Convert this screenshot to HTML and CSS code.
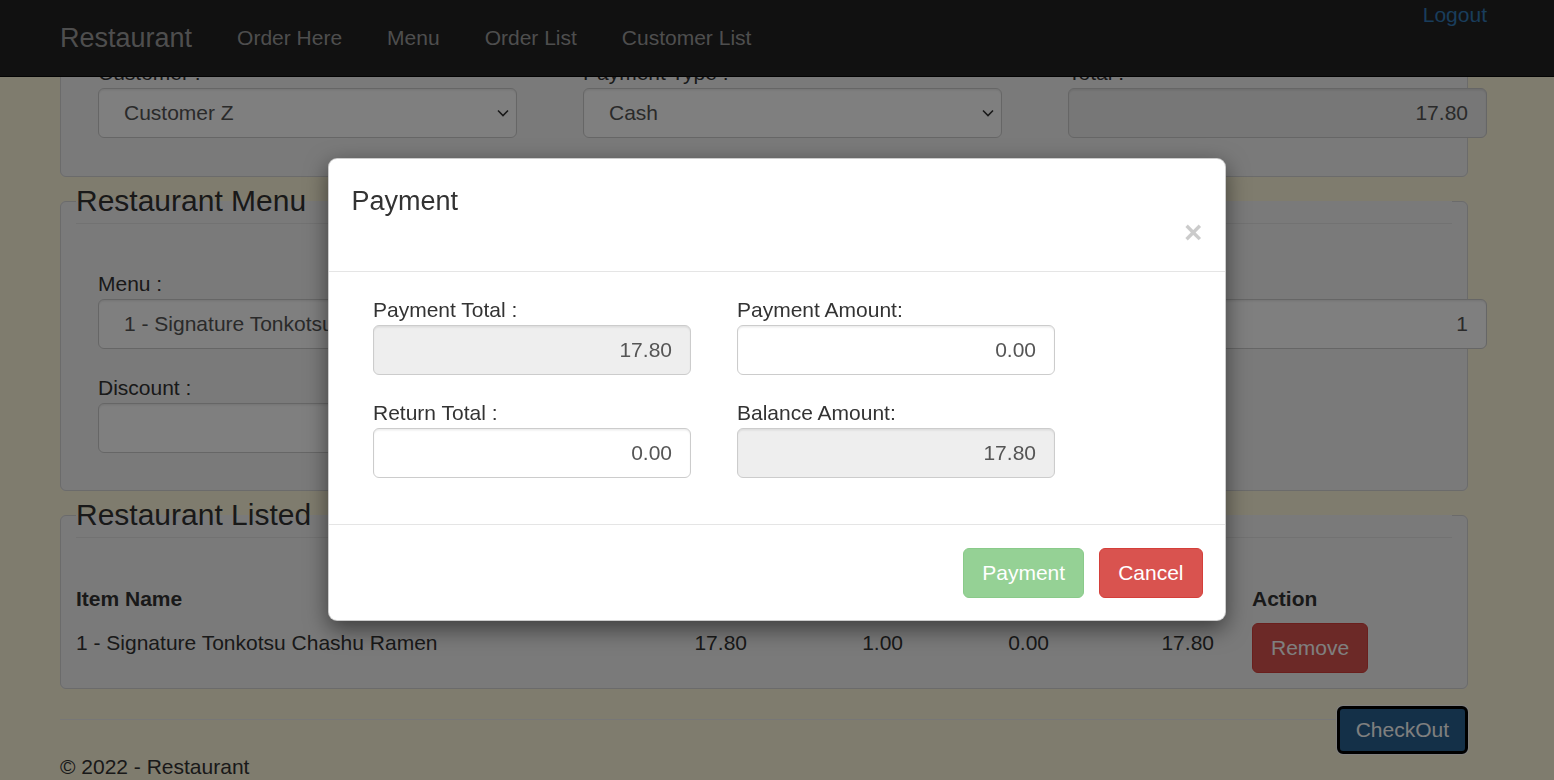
FILE: index.html
```html
<!DOCTYPE html>
<html lang="en">
<head>
<meta charset="utf-8">
<title>Order Here - Restaurant</title>
<link rel="stylesheet" href="styles.css">
</head>
<body>
<header class="navbar">
  <div class="nav-inner">
    <a class="brand" href="#">Restaurant</a>
    <nav class="nav-links">
      <a href="#">Order Here</a>
      <a href="#">Menu</a>
      <a href="#">Order List</a>
      <a href="#">Customer List</a>
    </nav>
    <a class="logout" href="#">Logout</a>
  </div>
</header>

<main class="container">
  <fieldset class="panel panel-top">
    <div class="form-grid">
      <div class="field">
        <label>Customer :</label>
        <div class="select-wrap">
          <select class="control"><option>Customer Z</option></select>
          <svg class="chev" viewBox="0 0 12 8" width="12" height="8"><path d="M1 1.5 L6 6.5 L11 1.5" fill="none" stroke="#333" stroke-width="1.6"/></svg>
        </div>
      </div>
      <div class="field">
        <label>Payment Type :</label>
        <div class="select-wrap">
          <select class="control"><option>Cash</option></select>
          <svg class="chev" viewBox="0 0 12 8" width="12" height="8"><path d="M1 1.5 L6 6.5 L11 1.5" fill="none" stroke="#333" stroke-width="1.6"/></svg>
        </div>
      </div>
      <div class="field">
        <label>Total :</label>
        <input class="control num" readonly value="17.80">
      </div>
    </div>
  </fieldset>

  <fieldset class="panel panel-menu">
    <legend>Restaurant Menu</legend>
    <div class="form-grid row-gap">
      <div class="field">
        <label>Menu :</label>
        <div class="select-wrap">
          <select class="control"><option>1 - Signature Tonkotsu Chashu Ramen</option></select>
          <svg class="chev" viewBox="0 0 12 8" width="12" height="8"><path d="M1 1.5 L6 6.5 L11 1.5" fill="none" stroke="#333" stroke-width="1.6"/></svg>
        </div>
      </div>
      <div class="field">
        <label>Price :</label>
        <input class="control num" readonly value="17.80">
      </div>
      <div class="field">
        <label>Quantity :</label>
        <input class="control num" value="1">
      </div>
    </div>
    <div class="form-grid">
      <div class="field">
        <label>Discount :</label>
        <input class="control num" value="">
      </div>
    </div>
  </fieldset>

  <fieldset class="panel panel-list">
    <legend>Restaurant Listed</legend>
    <table class="items">
      <colgroup>
        <col class="c-item"><col class="c-price"><col class="c-qty"><col class="c-disc"><col class="c-total"><col class="c-action">
      </colgroup>
      <thead>
        <tr>
          <th class="first">Item Name</th>
          <th class="r">Price</th>
          <th class="r">Quantity</th>
          <th class="r">Discount</th>
          <th class="r total">Total</th>
          <th class="act">Action</th>
        </tr>
      </thead>
      <tbody>
        <tr>
          <td class="first">1 - Signature Tonkotsu Chashu Ramen</td>
          <td class="r">17.80</td>
          <td class="r">1.00</td>
          <td class="r">0.00</td>
          <td class="r total">17.80</td>
          <td class="act"><button class="btn btn-danger">Remove</button></td>
        </tr>
      </tbody>
    </table>
  </fieldset>

  <div class="actions">
    <div class="rule"></div>
    <button class="btn btn-checkout">CheckOut</button>
  </div>

  <footer class="footer">
    <p>&copy; 2022 - Restaurant</p>
  </footer>
</main>

<div class="backdrop"></div>

<div class="modal">
  <div class="modal-dialog">
    <div class="modal-header">
      <h4 class="modal-title">Payment</h4>
      <div class="close-row"><button class="close">&times;</button></div>
    </div>
    <div class="modal-body">
      <div class="pay-grid">
        <div class="field">
          <label>Payment Total :</label>
          <input class="control num" readonly value="17.80">
        </div>
        <div class="field">
          <label>Payment Amount:</label>
          <input class="control num white" value="0.00">
        </div>
        <div class="field">
          <label>Return Total :</label>
          <input class="control num white" value="0.00">
        </div>
        <div class="field">
          <label>Balance Amount:</label>
          <input class="control num" readonly value="17.80">
        </div>
      </div>
    </div>
    <div class="modal-footer">
      <button class="btn btn-success" disabled>Payment</button>
      <button class="btn btn-danger">Cancel</button>
    </div>
  </div>
</div>
</body>
</html>
```

FILE: styles.css
```css
html, body {
  margin: 0;
  padding: 0;
  overflow: hidden;
  height: 100%;
}

body {
  background: #fff8dc;
  font-family: "Liberation Sans", Arial, sans-serif;
  font-size: 21px;
  line-height: 30px;
  color: #333;
}

a { text-decoration: none; }

/* ---------- navbar ---------- */
.navbar {
  position: fixed;
  top: 0;
  left: 0;
  right: 0;
  z-index: 5;
  background: #222;
  border-bottom: 1px solid #080808;
}

.nav-inner {
  display: flex;
  align-items: center;
  height: 76px;
  padding: 0 67px 0 37.5px;
}

.brand {
  padding: 0 22.5px;
  font-size: 27px;
  line-height: 30px;
  color: #9d9d9d;
}

.nav-links {
  display: flex;
}

.nav-links a {
  padding: 0 22.5px;
  color: #9d9d9d;
  font-size: 21px;
  line-height: 30px;
}

.logout {
  margin-left: auto;
  align-self: flex-start;
  color: #337ab7;
  line-height: 30px;
}

/* ---------- page ---------- */
.container {
  padding: 0 86px 0 60px;
}

.panel {
  margin: 1px 0 0;
  min-width: 0;
  border: 1px solid #d6d6d6;
  border-radius: 6px;
  background: #f5f5f5;
  padding: 45px 15px 37px;
}

.panel-top {
  margin-top: 20px;
  padding: 37px 15px 38px;
}

.panel-list {
  padding: 46px 15px 15px;
}

legend {
  display: block;
  width: 100%;
  padding: 0;
  font-size: 30px;
  line-height: 45px;
  color: #333;
  border-bottom: 1px solid #e5e5e5;
}

.form-grid {
  display: grid;
  grid-template-columns: repeat(3, 419px);
  column-gap: 66px;
  padding-left: 22px;
}

.row-gap {
  margin-bottom: 24px;
}

.field label {
  display: block;
  font-size: 21px;
  line-height: 30px;
  color: #333;
}

.select-wrap {
  position: relative;
}

.chev {
  position: absolute;
  right: 8px;
  top: 21px;
  pointer-events: none;
}

.control {
  display: block;
  box-sizing: border-box;
  width: 100%;
  height: 50px;
  padding: 9px 18px;
  font-family: inherit;
  font-size: 21px;
  line-height: 30px;
  color: #555;
  background: #fff;
  border: 1px solid #ccc;
  border-radius: 6px;
  box-shadow: inset 0 1.5px 1.5px rgba(0, 0, 0, .075);
}

select.control {
  -webkit-appearance: none;
  appearance: none;
  padding-left: 25px;
}

.control[readonly] {
  background: #eee;
}

.num { text-align: right; }

/* ---------- table ---------- */
.items {
  width: 1376px;
  border-collapse: collapse;
  table-layout: fixed;
}

.c-item { width: 564px; }
.c-price { width: 119px; }
.c-qty { width: 156px; }
.c-disc { width: 146px; }
.c-total { width: 179px; }
.c-action { width: 212px; }

.items th {
  padding: 0 12px 9px;
  line-height: 30px;
  font-weight: bold;
  text-align: left;
  vertical-align: top;
}

.items td {
  padding: 0 12px;
  line-height: 40px;
  vertical-align: top;
  white-space: nowrap;
}

.items .first { padding-left: 0; }
.items .r { text-align: right; }
.items .total { padding-right: 26px; }

/* ---------- buttons ---------- */
.btn {
  box-sizing: border-box;
  height: 50px;
  padding: 9px 18px;
  font-family: inherit;
  font-size: 21px;
  line-height: 30px;
  color: #fff;
  border: 1px solid transparent;
  border-radius: 6px;
  cursor: pointer;
}

.btn-danger {
  background: #d9534f;
  border-color: #d43f3a;
}

.btn-success {
  background: #5cb85c;
  border-color: #4cae4c;
  opacity: .65;
}

.actions {
  display: flex;
  align-items: flex-start;
  margin-top: 17px;
  margin-bottom: -2px;
}

.rule {
  flex: 1;
  margin-top: 13px;
  border-top: 1px solid #eee;
}

.btn-checkout {
  height: 48px;
  padding: 6px 16px;
  background: #286090;
  border: 3px solid #000;
  box-shadow: 0 0 0 1px #fff;
}

.footer p {
  margin: 0;
  line-height: 30px;
}

/* ---------- modal ---------- */
.backdrop {
  position: fixed;
  inset: 0;
  z-index: 10;
  background: rgba(0, 0, 0, .5);
}

.modal {
  position: fixed;
  inset: 0;
  z-index: 20;
}

.modal-dialog {
  box-sizing: border-box;
  width: 898px;
  margin: 158px auto 0;
  background: #fff;
  border: 1px solid rgba(0, 0, 0, .2);
  border-radius: 9px;
  box-shadow: 0 7.5px 22.5px rgba(0, 0, 0, .5);
}

.modal-header {
  padding: 22.5px;
  border-bottom: 1px solid #e5e5e5;
}

.modal-title {
  margin: 0;
  font-size: 27px;
  line-height: 38.6px;
  font-weight: normal;
  color: #333;
}

.close-row {
  display: flex;
  justify-content: flex-end;
  margin-top: -3px;
}

.close {
  padding: 0;
  border: 0;
  background: none;
  font-family: inherit;
  font-size: 31.5px;
  line-height: 31.5px;
  font-weight: bold;
  color: #000;
  opacity: .2;
}

.modal-body {
  padding: 22.5px;
}

.pay-grid {
  display: grid;
  grid-template-columns: 318px 318px;
  column-gap: 46px;
  row-gap: 23.5px;
  padding-left: 21.5px;
  margin-bottom: 23.5px;
}

.modal-footer {
  display: flex;
  justify-content: flex-end;
  gap: 15px;
  padding: 22.5px;
  border-top: 1px solid #e5e5e5;
}
```
